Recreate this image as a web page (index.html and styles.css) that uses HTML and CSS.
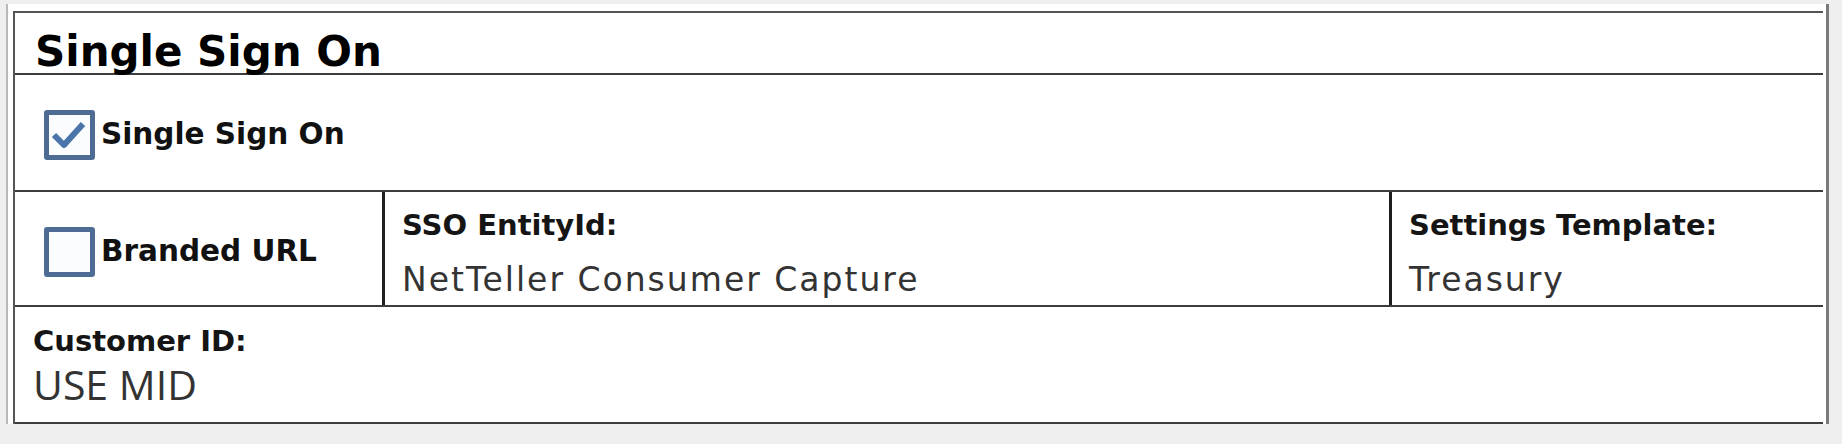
FILE: index.html
```html
<!DOCTYPE html>
<html lang="en">
<head>
    <meta charset="UTF-8">
    <meta name="viewport" content="width=device-width, initial-scale=1.0">
    <title>Single Sign On</title>
    <link rel="stylesheet" href="styles.css">
</head>
<body>
    <div class="frame">
        <div class="panel">
            <div class="panel-title">Single Sign On</div>

            <div class="row row-sso">
                <label class="check">
                    <span class="box">
                        <svg viewBox="0 0 41 40" width="41" height="40">
                            <path d="M5 20 L15 30 L34 9" fill="none" stroke="#4a74aa" stroke-width="6" stroke-linejoin="round"/>
                        </svg>
                    </span>
                    <span class="check-text">Single Sign On</span>
                </label>
            </div>

            <div class="row row-fields">
                <div class="cell cell-branded">
                    <label class="check">
                        <span class="box"></span>
                        <span class="check-text">Branded URL</span>
                    </label>
                </div>
                <div class="cell cell-entity">
                    <div class="field-label">SSO EntityId:</div>
                    <div class="field-value">NetTeller Consumer Capture</div>
                </div>
                <div class="cell cell-template">
                    <div class="field-label">Settings Template:</div>
                    <div class="field-value">Treasury</div>
                </div>
            </div>

            <div class="row row-customer">
                <div class="cell">
                    <div class="field-label">Customer ID:</div>
                    <div class="customer-value">USE MID</div>
                </div>
            </div>
        </div>
    </div>
</body>
</html>
```

FILE: styles.css
```css
body {
    margin: 0;
    background-color: #efefef;
    font-family: "DejaVu Sans", Verdana, sans-serif;
    color: #111;
}
.frame {
    margin: 4px 13px 0 6px;
    padding: 7px 0 0 5px;
    background-color: #fff;
    border-left: 2px solid #b8b8b8;
    border-right: 3px solid #7a7a7a;
}
.panel {
    margin-right: 3px;
    border-left: 2px solid #555;
    border-top: 2px solid #555;
}
.panel-title {
    height: 62px;
    box-sizing: border-box;
    padding: 18px 0 0 20px;
    font-size: 42px;
    line-height: 42px;
    font-weight: bold;
    color: #000;
    border-bottom: 2px solid #3c3c3c;
}
.row {
    display: flex;
    box-sizing: content-box;
    border-bottom: 2px solid #3c3c3c;
}
.row-sso {
    height: 111px;
    padding: 4px 0 0 29px;
    align-items: center;
}
.row-fields {
    height: 113px;
}
.row-customer {
    height: 115px;
}
.cell {
    box-sizing: border-box;
    padding: 19px 0 0 17px;
}
.cell-branded {
    width: 370px;
    padding: 6px 0 0 29px;
    display: flex;
    align-items: center;
    border-right: 3px solid #1e1e1e;
}
.cell-entity {
    width: 1007px;
    border-right: 3px solid #1e1e1e;
}
.cell-template {
    flex: 1;
}
.row-customer .cell {
    padding: 20px 0 0 18px;
}
.check {
    display: inline-flex;
    align-items: center;
}
.box {
    width: 51px;
    height: 50px;
    box-sizing: border-box;
    border: 5px solid #4e6c93;
    border-radius: 3px;
    background-color: #fbfcfe;
    margin-right: 6px;
    display: flex;
}
.check-text {
    font-size: 29.5px;
    line-height: 29px;
    font-weight: bold;
    color: #111;
}
.field-label {
    font-size: 29px;
    line-height: 29px;
    font-weight: bold;
    color: #151515;
}
.field-value {
    margin-top: 23px;
    font-size: 33px;
    line-height: 33px;
    letter-spacing: 2px;
    color: #333;
}
.customer-value {
    margin-top: 8px;
    font-family: "Open Sans", sans-serif;
    font-size: 41px;
    line-height: 41px;
    color: #333;
}
```
